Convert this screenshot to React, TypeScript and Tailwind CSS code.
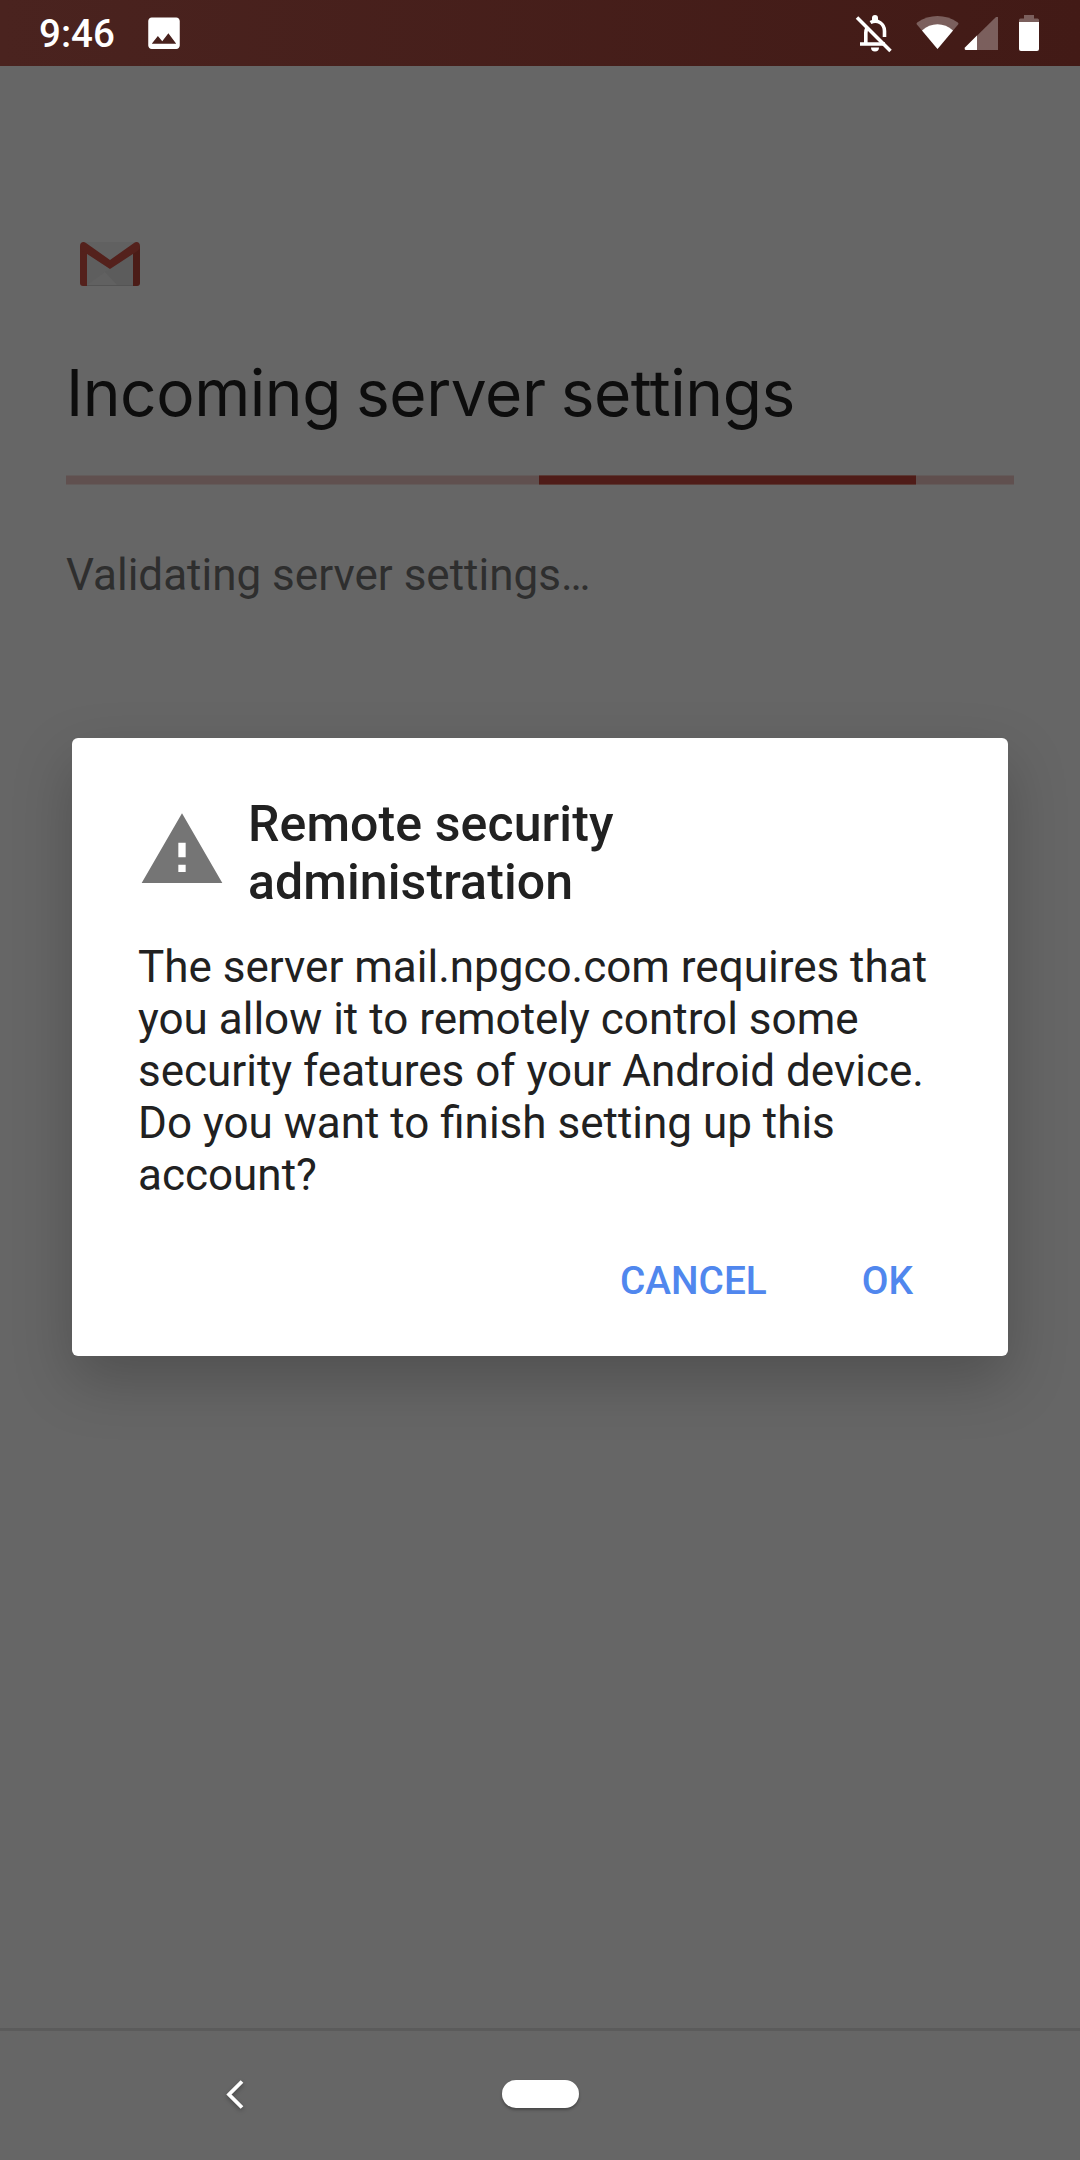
import type { ReactNode } from 'react';

function StatusBar() {
  return (
    <header className="flex h-[66px] items-center justify-between bg-linear-to-r from-[#4a231f] to-[#421a16] text-white">
      <div className="flex items-center pl-[39px]">
        <span className="pt-[2px] text-[38.5px] leading-[46px] font-medium">9:46</span>
        <svg className="ml-[28px] h-[42px] w-[42px]" viewBox="0 0 24 24" fill="currentColor">
          <path d="M21 19V5c0-1.100-.9-2-2-2H5c-1.100 0-2 .9-2 2v14c0 1.100.9 2 2 2h14c1.100 0 2-.9 2-2zM8.500 13.500l2.500 3.010L14.500 12l4.500 6H5l3.500-4.500z" transform="translate(0 .2)" />
        </svg>
      </div>
      <svg className="mr-[32px] h-[66px] w-[198px]" viewBox="850 0 198 66" fill="currentColor">
        <g fill="none" stroke="currentColor" strokeWidth="3.6">
          <path d="M857 17.500 890.500 51" />
          <path d="M865.800 44V33q0-3 1.300-5.500M860 44h25M870.500 22.500c7-4 14 1.500 14 8.500v6" />
        </g>
        <path d="M872 20v-2a3 3 0 0 1 6 0v2zM871 47.500h8a4 4 0 0 1-8 0z" />
        <path opacity=".3" d="M937.500 49 916.500 24q0-1 1-1.700c12-8.400 28-8.400 40 0q1 .7 1 1.700z" />
        <path d="M937.500 49 922 30.500c9-8.500 22-8.500 31 0z" />
        <path opacity=".3" d="M998 17v33H966q-2-.5-1-2.500l31-30.500z" />
        <path d="M977 35.500V50h-11q-2-.5-1-2.500z" />
        <path opacity=".3" d="M1019 22v-2q0-1.500 1.500-1.500h3.500V15h10v3.500h3.500q1.500 0 1.500 1.500v2z" />
        <path d="M1019 22h20v27q0 2-2 2h-16q-2 0-2-2z" />
      </svg>
    </header>
  );
}

function MailLogo() {
  return (
    <svg className="ml-[14px] h-[44px] w-[60px]" viewBox="0 0 60 44">
      <path d="M4 0h52v44H4z" fill="#616161" />
      <path d="M7 10v33L25 30 53 44V10L30 27z" fill="#5e5e5e" />
      <path d="M25 30 30 27 53 10v34H38z" fill="#5c5c5c" />
      <path d="M7 43h46v1H7z" fill="#545454" />
      <path d="M0 4h7v40H3q-3 0-3-3z" fill="#54211c" />
      <path d="M53 4h7v37q0 3-3 3h-4z" fill="#4b1c17" />
      <path d="M0 4C0 0 3.500-1 6 1l24 17L54 1c2.500-2 6-1 6 3 0 2-.8 3.500-2.500 5L30 27 2.500 9C.8 7.500 0 6 0 4z" fill="#54211c" />
    </svg>
  );
}

function DialogButton({ children }: { children: ReactNode }) {
  return (
    <button className="text-[38.8px] leading-[46px] font-medium text-[#5087ee]">{children}</button>
  );
}

function SecurityDialog() {
  return (
    <section className="mx-[72px] mt-[137px] h-[618px] rounded-[6px] bg-white px-[66px] pt-[57px] text-[#212121] shadow-[0_24px_60px_rgba(0,0,0,0.22)]">
      <div className="flex">
        <svg className="mt-[11px] h-[88px] w-[88px] shrink-0" viewBox="0 0 24 24" fill="#757575">
          <path d="M1 21h22L12 2 1 21zm12-3h-2v-2h2v2zm0-4h-2v-4h2v4z" />
        </svg>
        <h2 className="ml-[22px] text-[50px] leading-[58px] font-medium tracking-[0.1px]">
          Remote security
          <br />
          administration
        </h2>
      </div>
      <p className="mt-[30px] text-[44px] leading-[52px] whitespace-nowrap">
        The server mail.npgco.com requires that
        <br />
        you allow it to remotely control some
        <br />
        security features of your Android device.
        <br />
        Do you want to finish setting up this
        <br />
        account?
      </p>
      <div className="mt-[57px] flex justify-end gap-[95px] pr-[29px]">
        <DialogButton>CANCEL</DialogButton>
        <DialogButton>OK</DialogButton>
      </div>
    </section>
  );
}

function NavigationBar() {
  return (
    <nav className="mt-auto flex h-[132px] items-center border-t-[3px] border-[#5b5b5b] pb-[3px] pl-[220px]">
      <svg className="h-[40px] w-[30px] drop-shadow-[0_2px_2px_rgba(0,0,0,0.3)]" viewBox="0 0 30 40">
        <path d="M22 7.500 9 20.500l13 13" fill="none" stroke="#fff" strokeWidth="3.8" />
      </svg>
      <div className="ml-[252px] h-[28px] w-[77px] rounded-full bg-white shadow-[0_2px_3px_rgba(0,0,0,0.3)]" />
    </nav>
  );
}

export default function App() {
  return (
    <div className="flex h-[2160px] w-[1080px] flex-col overflow-hidden bg-[#666666] font-['Roboto',sans-serif]">
      <StatusBar />
      <main className="px-[66px] pt-[176px]">
        <MailLogo />
        <h1 className="mt-[67px] text-[64px] leading-[80px] tracking-[-0.45px] [word-spacing:-2.5px] whitespace-nowrap text-[#0d0d0d] font-['Inter',sans-serif]">
          Incoming server settings
        </h1>
        <div className="mt-[42px] flex h-[10px]">
          <div className="w-[473px] border-y border-[#635b5a] bg-[#60504f]" />
          <div className="w-[377px] border-y border-[#5a3a35] bg-[#4f1c18]" />
          <div className="flex-1 border-y border-[#635b5a] bg-[#60504f]" />
        </div>
        <p className="mt-[64px] text-[44px] leading-[52px] text-[#2e2e2e]">Validating server settings…</p>
      </main>
      <SecurityDialog />
      <NavigationBar />
    </div>
  );
}
